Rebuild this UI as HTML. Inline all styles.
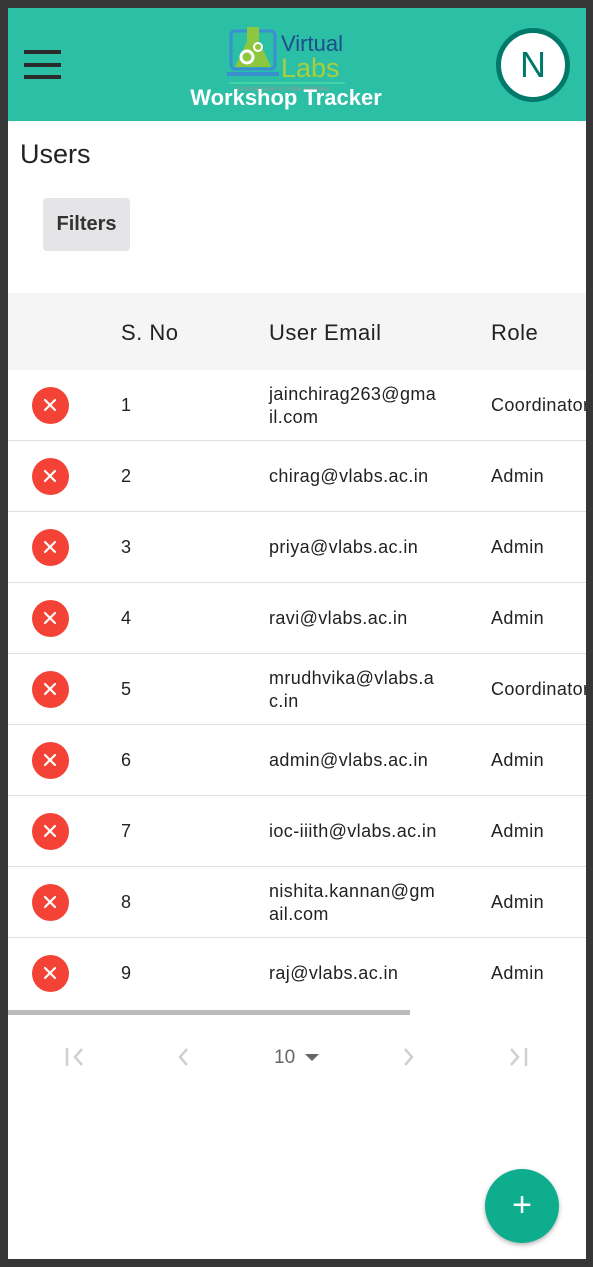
<!DOCTYPE html>
<html><head><style>
*{margin:0;padding:0;box-sizing:border-box}
body{width:593px;height:1267px;background:#363636;font-family:"Liberation Sans",sans-serif;position:relative;overflow:hidden}
#pg{position:absolute;left:8px;top:8px;width:578px;height:1251px;background:#fff;overflow:hidden}
#hd{position:absolute;left:0;top:0;width:578px;height:113px;background:#2bbfa5}
.bar{position:absolute;left:16px;width:37px;height:4px;background:#2b2b2b}
#av{position:absolute;left:488px;top:20px;width:74px;height:74px;border-radius:50%;background:#fff;border:5px solid #00796b;text-align:center;line-height:64px;font-size:36px;color:#00796b}
#tt{position:absolute;left:-11px;width:578px;top:77px;text-align:center;color:#fff;font-weight:bold;font-size:22px}
.row{position:absolute;left:0;width:578px;height:71px;border-bottom:1px solid #e0e0e0;font-size:18px;color:#222;letter-spacing:0.4px;white-space:nowrap}
.row span{position:absolute}
.x{position:absolute;left:24px;top:17px;width:37px;height:37px;border-radius:50%;background:#f44336}
</style></head><body><div id="pg">
<div id="hd">
<div class="bar" style="top:42px"></div><div class="bar" style="top:55px"></div><div class="bar" style="top:67px"></div>
<svg style="position:absolute;left:219px;top:11px" width="122" height="74">
<rect x="4" y="12" width="44" height="38" rx="4" fill="none" stroke="#3a8fd0" stroke-width="3"/>
<rect x="0" y="53" width="52" height="4" fill="#3a8fd0"/>
<path d="M20 8h12v14l12 26h-36l12-26z" fill="#8dc63f"/>
<circle cx="20" cy="38" r="6" fill="none" stroke="#fff" stroke-width="3"/>
<circle cx="31" cy="28" r="4" fill="none" stroke="#fff" stroke-width="2"/>
<text x="54" y="32" font-size="22" fill="#1e4d8c" font-family="Liberation Sans">Virtual</text>
<text x="54" y="58" font-size="27" fill="#a8cf3a" font-family="Liberation Sans">Labs</text>
<line x1="2" y1="64" x2="118" y2="64" stroke="#8fa" stroke-width="1" opacity="0.6"/>
<text x="8" y="72" font-size="7" fill="#999">An MoE Govt of India Initiative</text>
</svg>
<div id="tt">Workshop Tracker</div>
<div id="av">N</div>
</div>
<div style="position:absolute;left:12px;top:131px;font-size:27px;color:#222">Users</div>
<div style="position:absolute;left:35px;top:190px;width:87px;height:53px;background:#e5e5e7;border-radius:4px;text-align:center;line-height:53px;font-weight:bold;font-size:20px;color:#333">Filters</div>
<div style="position:absolute;left:0;top:285px;width:578px;height:77px;background:#f5f5f5;font-size:22px;color:#222;letter-spacing:0.5px">
<span style="position:absolute;left:113px;top:27px">S. No</span>
<span style="position:absolute;left:261px;top:27px">User Email</span>
<span style="position:absolute;left:483px;top:27px">Role</span></div>
<div class="row" style="top:362px"><div class="x"></div><span style="left:113px;top:25px">1</span><span style="left:261px;top:13px;line-height:23px">jainchirag263@gma<br>il.com</span><span style="left:483px;top:25px">Coordinator</span></div>
<div class="row" style="top:433px"><div class="x"></div><span style="left:113px;top:25px">2</span><span style="left:261px;top:25px">chirag@vlabs.ac.in</span><span style="left:483px;top:25px">Admin</span></div>
<div class="row" style="top:504px"><div class="x"></div><span style="left:113px;top:25px">3</span><span style="left:261px;top:25px">priya@vlabs.ac.in</span><span style="left:483px;top:25px">Admin</span></div>
<div class="row" style="top:575px"><div class="x"></div><span style="left:113px;top:25px">4</span><span style="left:261px;top:25px">ravi@vlabs.ac.in</span><span style="left:483px;top:25px">Admin</span></div>
<div class="row" style="top:646px"><div class="x"></div><span style="left:113px;top:25px">5</span><span style="left:261px;top:13px;line-height:23px">mrudhvika@vlabs.a<br>c.in</span><span style="left:483px;top:25px">Coordinator</span></div>
<div class="row" style="top:717px"><div class="x"></div><span style="left:113px;top:25px">6</span><span style="left:261px;top:25px">admin@vlabs.ac.in</span><span style="left:483px;top:25px">Admin</span></div>
<div class="row" style="top:788px"><div class="x"></div><span style="left:113px;top:25px">7</span><span style="left:261px;top:25px">ioc-iiith@vlabs.ac.in</span><span style="left:483px;top:25px">Admin</span></div>
<div class="row" style="top:859px"><div class="x"></div><span style="left:113px;top:25px">8</span><span style="left:261px;top:13px;line-height:23px">nishita.kannan@gm<br>ail.com</span><span style="left:483px;top:25px">Admin</span></div>
<div class="row" style="top:930px;border:none"><div class="x"></div><span style="left:113px;top:25px">9</span><span style="left:261px;top:25px">raj@vlabs.ac.in</span><span style="left:483px;top:25px">Admin</span></div>
<svg style="position:absolute;left:0;top:0;pointer-events:none" width="578" height="1000" stroke="#fff" stroke-width="2.2" stroke-linecap="round">
<g id="xx"><path d="M37 392l10 10M47 392l-10 10"/></g>
<use href="#xx" y="71"/><use href="#xx" y="142"/><use href="#xx" y="213"/><use href="#xx" y="284"/><use href="#xx" y="355"/><use href="#xx" y="426"/><use href="#xx" y="497"/><use href="#xx" y="568"/>
</svg>
<div style="position:absolute;left:0;top:1002px;width:402px;height:5px;background:#bbb"></div>
<svg style="position:absolute;left:0;top:1035px" width="578" height="30" fill="none" stroke="#d0d0d0" stroke-width="2.5">
<path d="M59 5v18M74 6l-7 8 7 8"/><path d="M179 6l-7 8 7 8"/><path d="M397 6l7 8-7 8"/><path d="M503 6l7 8-7 8M518 5v18"/>
<path d="M297 11h14l-7 7z" fill="#666" stroke="none"/>
</svg>
<div style="position:absolute;left:266px;top:1039px;font-size:19px;color:#666">10</div>
<div style="position:absolute;left:477px;top:1161px;width:74px;height:74px;border-radius:50%;background:#0ead8d;color:#fff;text-align:center;line-height:72px;font-size:34px;box-shadow:0 2px 5px rgba(0,0,0,.3)">+</div>
</div></body></html>
